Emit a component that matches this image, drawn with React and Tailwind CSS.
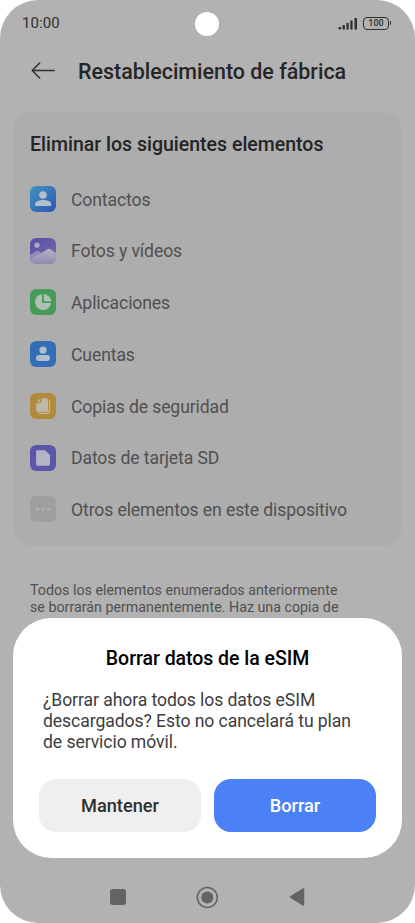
import React from "react";

function Tile({ children, fill }) {
  return (
    <svg className="block h-[26px] w-[26px] shrink-0" viewBox="0 0 26 26">
      <rect width="26" height="26" rx="6.2" fill={fill} />
      {children}
    </svg>
  );
}

const icons = {
  contacts: (
    <Tile fill="url(#contactsBlue)">
      <defs>
        <linearGradient id="contactsBlue" x1="0" y1="0" x2="1" y2="1">
          <stop offset="0" stopColor="#4593bd" />
          <stop offset="1" stopColor="#2c57b4" />
        </linearGradient>
      </defs>
      <circle cx="13" cy="9" r="3.8" fill="#b2bfcd" />
      <path d="M5 18.600C5 15.600 8.500 14.100 13 14.100s8.300 1.500 8.300 4.500c0 .8-.5 1.300-1.300 1.300H6.300C5.500 19.900 5 19.400 5 18.600Z" fill="#b2bfcd" />
    </Tile>
  ),
  photos: (
    <Tile fill="url(#photoSky)">
      <defs>
        <linearGradient id="photoSky" x1="0" y1="0" x2="0.6" y2="1">
          <stop offset="0" stopColor="#5451a4" />
          <stop offset="1" stopColor="#7468b0" />
        </linearGradient>
        <linearGradient id="photoHill" x1="0" y1="0" x2="0" y2="1">
          <stop offset="0" stopColor="#b5b2c2" />
          <stop offset="1" stopColor="#908bae" />
        </linearGradient>
        <clipPath id="photoClip">
          <rect width="26" height="26" rx="6.200" />
        </clipPath>
      </defs>
      <g clipPath="url(#photoClip)">
        <circle cx="7" cy="7.200" r="2.600" fill="#aba9c3" />
        <path d="M0 17 6.500 13q1-.6 2 0L15 18v8H0Z" fill="#938cb8" />
        <path d="M0 22 17.500 11.200q1.500-.9 3 0L26 15v11H0Z" fill="url(#photoHill)" />
      </g>
    </Tile>
  ),
  apps: (
    <Tile fill="#459c57">
      <path d="M12 4.900A8.100 8.100 0 1 0 21.100 14H12Z" fill="#b0beb3" />
      <path d="M13.800 4.900a8.100 8.100 0 0 1 7.400 7.300h-7.400Z" fill="#b0beb3" />
    </Tile>
  ),
  accounts: (
    <Tile fill="#316eb5">
      <circle cx="13" cy="9.100" r="3.600" fill="#b1bdca" />
      <rect x="6" y="14" width="14" height="6" rx="3" fill="#b1bdca" />
    </Tile>
  ),
  backups: (
    <Tile fill="#b28a3c">
      <path d="M11.300 5.300h5.200a1.500 1.500 0 0 1 1.500 1.500v10.700a1.500 1.500 0 0 1-1.500 1.500H7.700a1.500 1.500 0 0 1-1.500-1.500v-7.300h3.600a1.500 1.500 0 0 0 1.500-1.500Z" fill="#bfb8a9" />
      <path d="M10 5.700v2.200A1.100 1.100 0 0 1 8.900 9H6.700Z" fill="#bfb8a9" />
      <path d="M19.500 7.700v10.500a2.200 2.200 0 0 1-2.200 2.200H9.200" fill="none" stroke="#bfb8a9" strokeWidth="1.200" strokeLinecap="round" />
    </Tile>
  ),
  sd: (
    <Tile fill="#5d57aa">
      <path d="M7.700 5.300h6.800c.6 0 1 .2 1.400.6l3.500 3.600c.4.4.6.8.6 1.400v8.200c0 1-.6 1.600-1.600 1.600H7.700c-1 0-1.600-.6-1.600-1.600V6.900c0-1 .6-1.600 1.600-1.600Z" fill="#b5b4c5" />
    </Tile>
  ),
  other: (
    <Tile fill="#9f9f9f">
      <circle cx="7.500" cy="13.300" r="1.450" fill="#b2b2b2" />
      <circle cx="13" cy="13.300" r="1.450" fill="#b2b2b2" />
      <circle cx="18.500" cy="13.300" r="1.450" fill="#b2b2b2" />
    </Tile>
  ),
};

const items = [
  ["contacts", "Contactos"],
  ["photos", "Fotos y vídeos"],
  ["apps", "Aplicaciones"],
  ["accounts", "Cuentas"],
  ["backups", "Copias de seguridad"],
  ["sd", "Datos de tarjeta SD"],
  ["other", "Otros elementos en este dispositivo"],
];

function StatusBar() {
  return (
    <div className="grid h-[46px] grid-cols-[1fr_24px_1fr] items-center pl-[22px] pr-[24px] text-[#303030]">
      <span className="text-[15px] leading-5 tracking-[0.1px]">10:00</span>
      <span className="mt-[2px] ml-[0.3px] h-6 w-6 rounded-full bg-white" />
      <div className="flex items-center justify-end gap-[5px]">
        <svg className="h-[13px] w-5" viewBox="0 0 20 13" fill="#303030">
          <rect x="0.500" y="9.900" width="2.700" height="2.600" rx="0.700" />
          <rect x="4.600" y="8" width="2.300" height="4.500" rx="0.500" />
          <rect x="8.400" y="6" width="2.300" height="6.500" rx="0.500" />
          <rect x="12.300" y="3.500" width="2.300" height="9" rx="0.500" />
          <rect x="16.500" y="1" width="2.500" height="11.500" rx="0.500" />
        </svg>
        <div className="flex items-center gap-[0.5px]">
          <div className="flex h-[13px] w-[26px] items-center justify-center rounded-[4px] border-[1.4px] border-[#303030] text-[9px] leading-none font-medium">
            100
          </div>
          <span className="h-1 w-[1.5px] rounded-r bg-[#303030]" />
        </div>
      </div>
    </div>
  );
}

function Dialog() {
  return (
    <div className="absolute top-[618px] left-[13px] flex h-[240px] w-[389px] flex-col rounded-[38px] bg-white px-[26px] pt-[29px]">
      <h2 className="text-center text-[19.5px] leading-6 font-medium tracking-[-0.04px] whitespace-nowrap text-black">
        Borrar datos de la eSIM
      </h2>
      <p className="mt-[19px] pl-[4px] text-[17.6px] leading-[21px] tracking-[-0.08px] whitespace-nowrap text-[#3d3d3d]">
        ¿Borrar ahora todos los datos eSIM
        <br />
        descargados? Esto no cancelará tu plan
        <br />
        de servicio móvil.
      </p>
      <div className="mt-[25.5px] flex gap-[13px]">
        <button className="h-[53.5px] w-[162px] rounded-[17px] bg-[#efefef] pt-px text-[18.2px] font-medium text-[#2f2f2f]">
          Mantener
        </button>
        <button className="h-[53.5px] w-[162px] rounded-[17px] bg-[#4b80f7] pt-px text-[18.2px] font-medium text-white">
          Borrar
        </button>
      </div>
    </div>
  );
}

export default function App() {
  return (
    <div className="h-[923px] w-[415px] overflow-hidden bg-white font-['Roboto',sans-serif]">
      <div className="relative flex h-[923px] flex-col overflow-hidden rounded-[38px] bg-[#b2b2b2]">
        <StatusBar />
        <header className="flex h-[50px] items-center pl-[30px] text-[#262626]">
          <svg className="h-[18px] w-[26px] shrink-0" viewBox="0 0 26 18" fill="none" stroke="#303030" strokeWidth="1.500" strokeLinecap="round" strokeLinejoin="round">
            <path d="M24.200 8.500H2.200M9.700 1 2.200 8.500 9.700 16" />
          </svg>
          <h1 className="ml-[22px] pt-[2px] text-[21.450px] leading-7 font-medium whitespace-nowrap">
            Restablecimiento de fábrica
          </h1>
        </header>
        <section className="mx-[13px] mt-[15.5px] h-[434px] rounded-[20px] bg-[#adadad] px-[17px] pt-[21px]">
          <h2 className="text-[19.5px] leading-6 font-medium whitespace-nowrap text-[#242424]">
            Eliminar los siguientes elementos
          </h2>
          <ul className="mt-[16.5px]">
            {items.map(([icon, label]) => (
              <li key={icon} className="flex h-[51.75px] items-center gap-[15px] text-[17.6px] tracking-[-0.11px] whitespace-nowrap text-[#505050]">
                {icons[icon]}
                <span className="pt-[2px]">{label}</span>
              </li>
            ))}
          </ul>
        </section>
        <p className="mt-[36.5px] pl-[30px] text-[14.250px] leading-[17px] whitespace-nowrap text-[#505050]">
          Todos los elementos enumerados anteriormente
          <br />
          se borrarán permanentemente. Haz una copia de
        </p>
        <nav className="mt-auto flex h-[52px] items-center pl-[109.5px]">
          <span className="h-4 w-4 rounded-[3px] bg-[#636363]" />
          <svg className="ml-[70.5px] h-[23px] w-[23px]" viewBox="0 0 23 23">
            <circle cx="11.300" cy="11.500" r="10" fill="none" stroke="#636363" strokeWidth="1.500" />
            <circle cx="11.300" cy="11.500" r="6" fill="#636363" />
          </svg>
          <svg className="ml-[70px] h-[20px] w-[17px]" viewBox="0 0 17 20">
            <path d="M14.500 2v16L1.500 10Z" fill="#636363" stroke="#636363" strokeWidth="1.500" strokeLinejoin="round" />
          </svg>
        </nav>
        <Dialog />
      </div>
    </div>
  );
}
